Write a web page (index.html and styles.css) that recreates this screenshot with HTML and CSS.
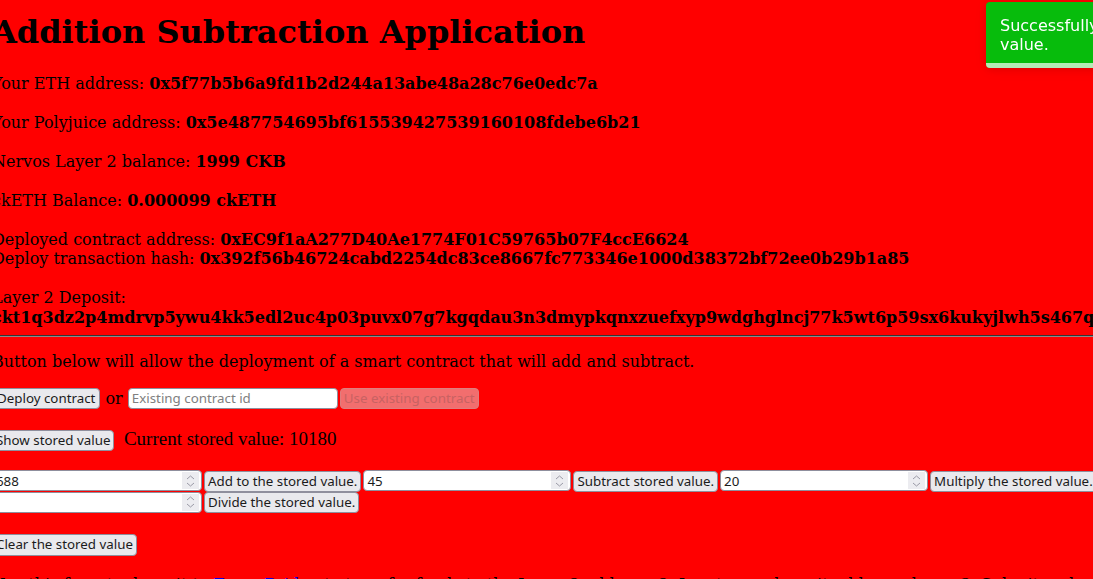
FILE: index.html
```html
<!DOCTYPE html>
<html>
<head>
<meta charset="utf-8">
<title>Addition Subtraction Application</title>
<link rel="stylesheet" href="styles.css">
</head>
<body>
<div class="app">
  <h1 class="title">Addition Subtraction Application</h1>
  Your ETH address: <b>0x5f77b5b6a9fd1b2d244a13abe48a28c76e0edc7a</b>
  <br><br>
  Your Polyjuice address: <b>0x5e487754695bf615539427539160108fdebe6b21</b>
  <br><br>
  Nervos Layer 2 balance: <b>1999 CKB</b>
  <br><br>
  ckETH Balance: <b>0.000099 ckETH</b>
  <br><br>
  Deployed contract address: <b>0xEC9f1aA277D40Ae1774F01C59765b07F4ccE6624</b><br>
  Deploy transaction hash: <b>0x392f56b46724cabd2254dc83ce8667fc773346e1000d38372bf72ee0b29b1a85</b>
  <br><br>
  Layer 2 Deposit:<br>
  <b class="nowrap">ckt1q3dz2p4mdrvp5ywu4kk5edl2uc4p03puvx07g7kgqdau3n3dmypkqnxzuefxyp9wdghglncj77k5wt6p59sx6kukyjlwh5s467qgp8aqvmtz5j6ydkk</b>
  <hr class="rule">
  <p class="intro">Button below will allow the deployment of a smart contract that will add and subtract.</p>
  <button class="btn wide">Deploy contract</button> or <input class="field text" placeholder="Existing contract id"><button class="btn gap" disabled>Use existing contract</button>
  <br><br>
  <button class="btn">Show stored value</button><span class="stored">&nbsp;&nbsp;Current stored value: 10180</span>
  <br><br>
  <span class="num"><input class="field first" type="number" value="688"><span class="spin"><svg width="9" height="14" viewBox="0 0 9 14"><path d="M1 5 L4.5 2 L8 5 M1 9 L4.5 12 L8 9" fill="none" stroke="#9a9aa6" stroke-width="1"/></svg></span></span><button class="btn gap">Add to the stored value.</button><span class="num gap"><input class="field" type="number" value="45"><span class="spin"><svg width="9" height="14" viewBox="0 0 9 14"><path d="M1 5 L4.5 2 L8 5 M1 9 L4.5 12 L8 9" fill="none" stroke="#9a9aa6" stroke-width="1"/></svg></span></span><button class="btn gap">Subtract stored value.</button><span class="num gap"><input class="field" type="number" value="20"><span class="spin"><svg width="9" height="14" viewBox="0 0 9 14"><path d="M1 5 L4.5 2 L8 5 M1 9 L4.5 12 L8 9" fill="none" stroke="#9a9aa6" stroke-width="1"/></svg></span></span><button class="btn gap">Multiply the stored value.</button><span class="num"><input class="field first" type="number"><span class="spin"><svg width="9" height="14" viewBox="0 0 9 14"><path d="M1 5 L4.5 2 L8 5 M1 9 L4.5 12 L8 9" fill="none" stroke="#9a9aa6" stroke-width="1"/></svg></span></span><button class="btn gap">Divide the stored value.</button>
  <br><br>
  <button class="btn clear">Clear the stored value</button>
  <br><br>
  Use this form to deposit to <a class="link" href="#">Force Bridge</a> to transfer funds to the Layer 2 address. 2. Input your deposit address above. 3. Submit and wait for confirmation.
</div>
<div class="toast">
  <div class="toast-body">Successfully changed stored value.</div>
  <div class="toast-progress"></div>
</div>
</body>
</html>
```
FILE: styles.css
```css
html {
  overflow: hidden;
  background: #ff0000;
}
body {
  margin: 0;
  background: #ff0000;
  font-family: "DejaVu Serif", serif;
  font-size: 16px;
  line-height: 19.5px;
  color: #000;
}
.app {
  margin-left: -8px;
  padding-top: 14px;
  width: 1240px;
}
.title {
  margin: 0 0 22.5px;
  font-size: 32px;
  line-height: 37px;
  font-weight: bold;
}
.nowrap {
  white-space: nowrap;
}
.rule {
  margin: 8px 0 0;
  width: 1110px;
  border: 1px inset #8a8a8a;
}
.intro {
  margin: 15px 0 16px;
}
.btn {
  -webkit-appearance: none;
  appearance: none;
  font-family: "Noto Sans", "DejaVu Sans", sans-serif;
  font-size: 13.333px;
  line-height: 17px;
  color: #1b1b1b;
  background: #e9e9ed;
  border: 1px solid #8f8f9d;
  border-radius: 4px;
  padding: 0 3px;
  margin: 0;
  height: 21px;
  box-sizing: border-box;
}
.wide {
  padding: 0 4px;
}
.btn:disabled {
  background: #f26e6e;
  border-color: #de7e7e;
  color: #c86262;
}
.clear {
  height: 22px;
  margin-top: 1px;
}
.gap {
  margin-left: 2px;
}
.field {
  -webkit-appearance: none;
  appearance: none;
  -moz-appearance: textfield;
  font-family: "Noto Sans", "DejaVu Sans", sans-serif;
  font-size: 13.333px;
  color: #1b1b1b;
  background: #fff;
  border: 1px solid #8f8f9d;
  border-radius: 4px;
  width: 208px;
  height: 21px;
  box-sizing: border-box;
  padding: 0 3px;
  margin: 0;
}
.field::-webkit-outer-spin-button,
.field::-webkit-inner-spin-button {
  -webkit-appearance: none;
  margin: 0;
}
.text,
.first {
  width: 210px;
}
.field::placeholder {
  color: #808080;
}
.num {
  position: relative;
  display: inline-block;
}
.spin {
  position: absolute;
  top: 2px;
  right: 3px;
  width: 17px;
  height: 17px;
  background: #ececf0;
  display: flex;
  align-items: center;
  justify-content: center;
}
.stored {
  font-family: "Liberation Serif", serif;
  font-size: 19px;
}
.link {
  color: #0000ee;
  text-decoration: none;
}
.toast {
  position: fixed;
  top: 2px;
  left: 986px;
  width: 320px;
  min-height: 64px;
  box-sizing: border-box;
  padding: 8px;
  border-radius: 4px;
  background: #07bc0c;
  color: #fff;
  font-family: "DejaVu Sans", sans-serif;
  font-size: 16px;
  line-height: 19px;
  box-shadow: 0 1px 10px rgba(0, 0, 0, 0.1), 0 2px 15px rgba(0, 0, 0, 0.05);
  overflow: hidden;
}
.toast-body {
  padding: 6px 40px 6px 6px;
}
.toast-progress {
  position: absolute;
  left: 0;
  bottom: 0;
  width: 100%;
  height: 5px;
  background: rgba(255, 255, 255, 0.7);
}
```
